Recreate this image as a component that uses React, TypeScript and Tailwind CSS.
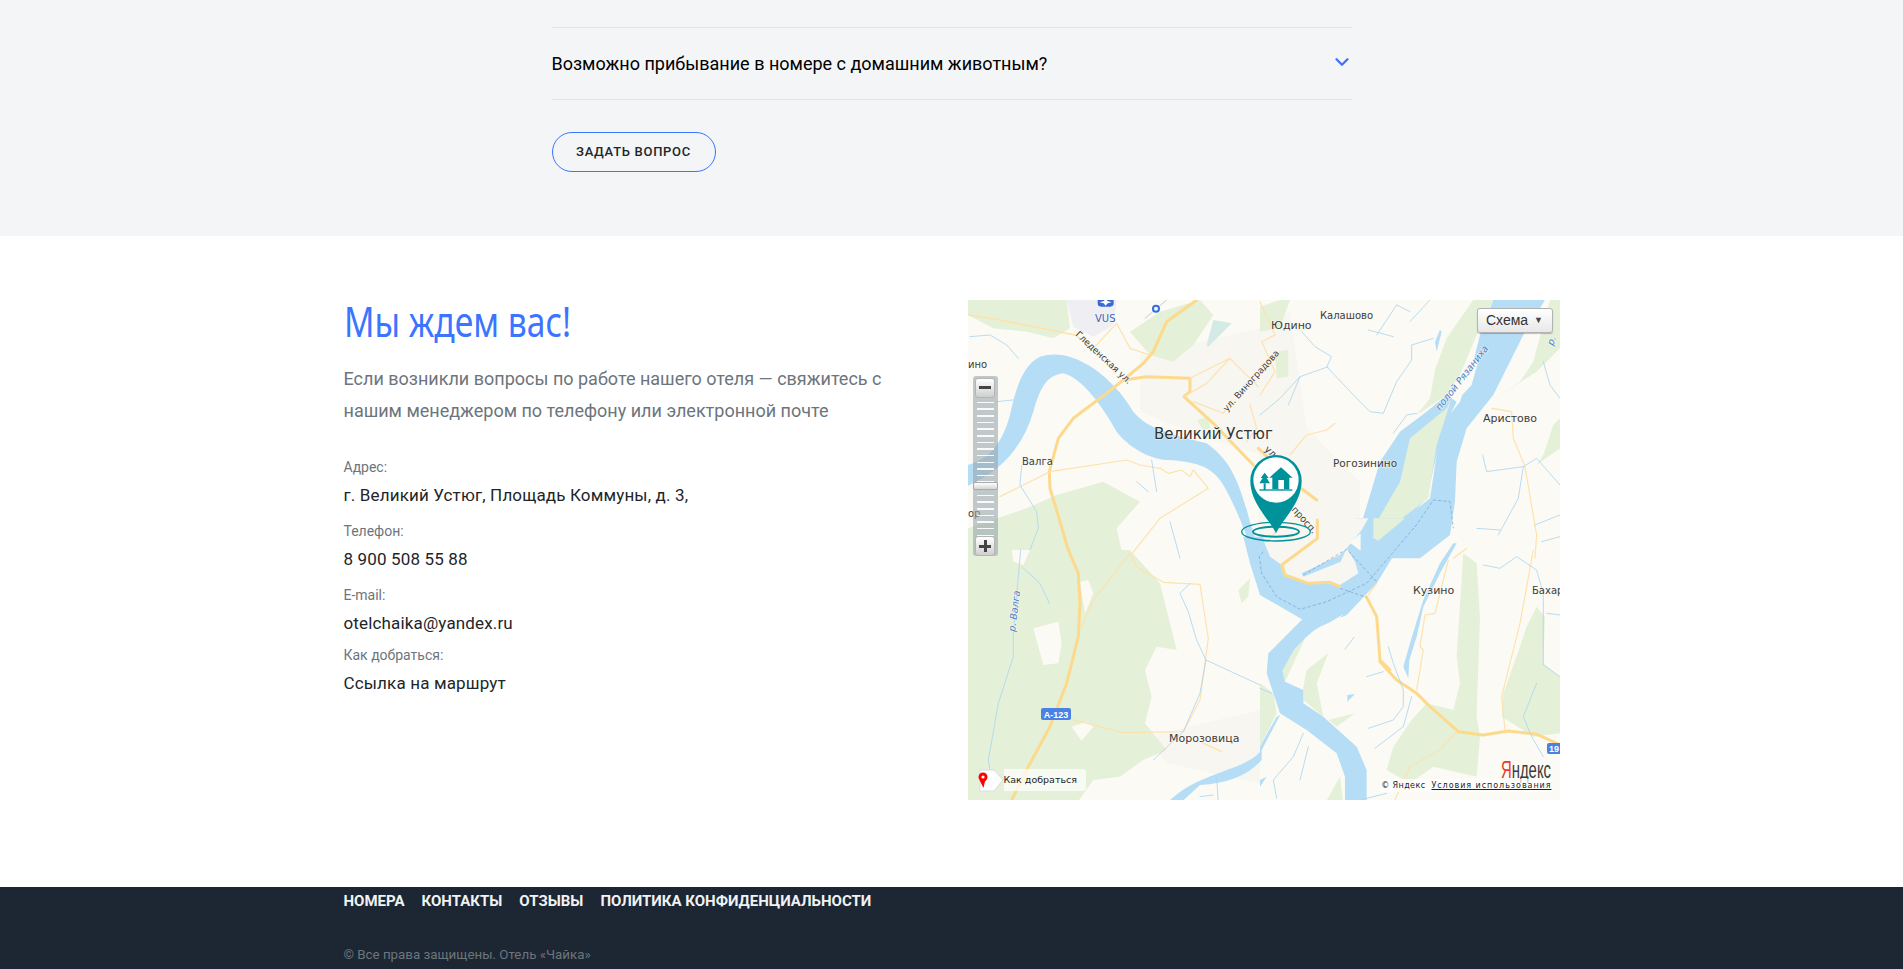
import { ChevronDown } from "lucide-react";

const contacts = [
  { label: "Адрес:", value: "г. Великий Устюг, Площадь Коммуны, д. 3,", mb: "mb-[13px]" },
  { label: "Телефон:", value: "8 900 508 55 88", mb: "mb-[13px]" },
  { label: "E-mail:", value: "otelchaika@yandex.ru", mb: "mb-[9px]" },
  { label: "Как добраться:", value: "Ссылка на маршрут", mb: "" },
];

const navLinks = ["Номера", "Контакты", "Отзывы", "Политика конфиденциальности"];

const LAND = "#fcfaf5";
const URBAN = "#f8f6f0";
const GREEN = "#e4f1d8";
const WATER = "#b5ddf6";
const ROAD = "#fdd98c";
const MINOR = "#fde2ad";
const STREAM = "#a9d6f1";
const DASH = "#6f9fd8";

// coordinates of each group are read at 3x from the reference
function Quadrant({ x, y, children }: { x: number; y: number; children: React.ReactNode }) {
  return <g transform={`translate(${x},${y}) scale(0.3333)`}>{children}</g>;
}

function Greens({ d }: { d: string[] }) {
  return (
    <>
      {d.map((p) => (
        <path key={p} d={p} fill={GREEN} />
      ))}
    </>
  );
}

function Lines({ d, color, width }: { d: string[]; color: string; width: number }) {
  return (
    <>
      {d.map((p) => (
        <path key={p} d={p} fill="none" stroke={color} strokeWidth={width} strokeLinejoin="round" strokeLinecap="round" />
      ))}
    </>
  );
}

function MapLabel({ x, y, size = 11, rotate, color = "#3c3c3c", italic, children }: {
  x: number; y: number; size?: number; rotate?: number; color?: string; italic?: boolean; children: string;
}) {
  return (
    <text
      x={x}
      y={y}
      fontSize={size}
      fill={color}
      fontStyle={italic ? "italic" : "normal"}
      fontFamily="'DejaVu Sans', sans-serif"
      stroke="#fbf9f3"
      strokeOpacity={0.6}
      strokeWidth={1.5}
      paintOrder="stroke"
      transform={rotate ? `rotate(${rotate} ${x} ${y})` : undefined}
    >
      {children}
    </text>
  );
}

function MapDrawing() {
  return (
    <svg viewBox="0 0 592 500" className="absolute inset-0 block h-full w-full">
      <rect width="592" height="500" fill={LAND} />

      {/* top left */}
      <Quadrant x={-8} y={-5}>
        <path d="M540 180 L905 100 L905 480 L740 430 L540 350 Z" fill={URBAN} />
        <path d="M320 15 L470 15 L460 90 L400 125 L340 95 Z" fill="#eeeef3" />
        <Greens d={[
          "M24 15 L320 15 L330 100 L280 130 L200 110 L100 100 L24 60 Z",
          "M510 110 L600 50 L720 15 L760 60 L700 150 L640 200 L570 180 Z",
          "M24 700 L200 640 L290 600 L430 560 L540 620 L470 700 L490 790 L24 790 Z",
          "M710 375 L745 365 L750 400 L730 405 Z",
        ]} />
        <path d="M740 150 L760 75 L815 85 L745 155 Z" fill="#d3ebe4" />
        <path d="M24 510 C70 495 120 470 150 360 C170 270 190 210 240 185 C290 170 340 180 400 220 C450 255 490 300 520 350 C560 395 600 410 740 445 C800 490 830 530 870 680 L905 790 L882 790 C860 720 830 640 790 570 C760 520 720 500 620 495 C560 490 500 450 470 410 C430 340 370 250 310 235 C260 240 240 280 220 350 C190 450 130 525 24 572 Z" fill={WATER} />
        <path d="M445 405 L505 445 L490 450 L450 420 Z" fill={LAND} />
        <Lines width={9} color={ROAD} d={[
          "M710 15 L620 80 L580 170 L550 205 L490 255 L420 310 L340 370 L295 430 L268 530 L270 580 L300 680 L332 790",
          "M490 255 L560 245 L690 250 L690 290 L672 305 L760 385 L880 510",
        ]} />
        <Lines width={5} color={MINOR} d={["M24 60 L120 75 L345 120"]} />
        <Lines width={3.5} color={MINOR} d={[
          "M120 605 L270 530 L500 495 L540 510 L600 520 L625 535 L665 525 L690 545 L700 525 L745 580 L600 670 L505 790",
          "M690 250 L810 190 L900 280",
          "M672 305 L740 265 L810 190",
          "M700 320 L790 355 L800 340",
          "M470 85 L510 160 L570 180",
          "M345 120 L400 160 L470 85",
          "M870 330 L890 400 L860 440",
        ]} />
        <Lines width={2.5} color={STREAM} d={[
          "M30 125 L90 120 L140 150 L175 190",
          "M110 320 L160 315",
          "M575 495 L590 590",
          "M530 560 L565 590",
          "M185 510 L180 570 L230 650 L235 700 L200 790",
          "M630 680 L660 790",
        ]} />
        <Lines width={1.5} color="#999" d={["M555 70 L620 15"]} />
        <circle cx="588" cy="41" r="9" fill="#fff" stroke="#2f6fe0" strokeWidth="6" />
        <rect x="413" y="0" width="48" height="35" rx="10" fill="#3b69d6" />
        <path d="M437 8 L442 18 L455 22 L443 25 L437 32 L431 25 L419 22 L432 18 Z" fill="#fff" />
      </Quadrant>

      {/* top right */}
      <Quadrant x={292} y={-5}>
        <path d="M-5 100 L90 50 L140 400 L300 560 L300 790 L-5 790 Z" fill={URBAN} />
        <Greens d={[
          "M470 360 L510 310 L525 225 L560 130 L640 15 L700 15 L650 120 L600 240 L560 300 Z",
          "M690 320 L780 260 L820 200 L870 15 L900 15 L900 160 L830 230 Z",
          "M850 480 L880 390 L900 370 L900 460 L830 510 Z",
          "M0 35 L60 15 L90 15 L60 100 L0 110 Z",
          "M45 170 L85 165 L85 245 L50 250 Z",
        ]} />
        <path d="M560 300 L500 350 L420 410 L360 500 L330 600 L300 700 L230 790 L340 790 L420 700 L500 610 L530 480 L570 360 L590 320 Z" fill={WATER} />
        <path d="M340 735 L345 690 L420 560 L450 430 L560 340 L575 310 L530 450 L505 610 L400 690 Z" fill={GREEN} />
        <path d="M700 15 L855 15 L790 120 L700 300 L620 400 L590 500 L585 620 L570 720 L480 790 L340 790 L400 700 L510 610 L530 480 L560 370 L600 320 L640 200 L660 120 Z" fill={WATER} />
        <path d="M590 318 L620 230 L660 180 L635 270 Z" fill={LAND} />
        <path d="M525 140 L540 105 L545 110 L530 170 Z" fill={WATER} />
        <Lines width={9} color={ROAD} d={["M-5 460 L110 570 L170 615"]} />
        <Lines width={3.5} color={MINOR} d={[
          "M90 480 L140 420 L200 405 L225 385",
          "M0 20 L45 120 L5 140 L45 230 L0 300",
          "M695 340 L755 350 L760 430 L795 515 L830 720 L825 790",
          "M580 790 L620 760",
        ]} />
        <Lines width={2.5} color={STREAM} d={[
          "M125 110 L165 155 L215 185 L200 215 L290 310 L330 350 L370 355 L410 260 L455 195 L455 150 L520 130",
          "M85 330 L120 245 L205 215",
          "M0 360 L60 310 L120 245",
          "M410 30 L350 120 M325 105 L400 125 M410 30 L450 50",
          "M450 80 L510 15",
          "M668 480 L680 530 L790 515 L830 490 L900 570",
          "M790 515 L775 610 L715 720",
          "M650 700 L720 705",
          "M825 690 L900 660 M845 740 L900 725",
          "M850 200 L870 270 L900 310",
          "M400 415 L440 360 L470 355",
        ]} />
        <path d="M465 696 L520 615 L570 620 L580 700" fill="none" stroke={DASH} strokeWidth="2" strokeDasharray="10 6" />
      </Quadrant>

      {/* bottom left */}
      <Quadrant x={-8} y={250}>
        <path d="M560 560 L900 480 L900 700 L620 640 Z" fill={URBAN} />
        <Greens d={["M24 0 L510 0 L600 100 L650 300 L590 290 L555 360 L575 440 L555 520 L620 600 L550 630 L480 680 L400 690 L350 760 L24 760 Z"]} />
        <path d="M220 235 L295 215 L305 280 L295 340 L250 345 Z" fill={LAND} />
        <path d="M335 530 L380 515 L400 530 L365 572 Z" fill={LAND} />
        <path d="M360 95 L385 90 L400 130 L375 190 Z" fill={LAND} />
        <path d="M155 0 L210 0 L190 45 L160 35 Z" fill={LAND} />
        <path d="M835 120 L870 85 L865 140 L845 160 Z" fill={GREEN} />
        <path d="M620 760 C680 700 750 680 800 660 C860 640 890 620 905 600 L905 630 C860 680 800 700 720 705 L660 760 Z" fill={WATER} />
        <Lines width={9} color={ROAD} d={["M325 0 L355 70 L360 160 L355 260 L320 400 L270 530 L205 650 L150 760"]} />
        <Lines width={3.5} color={MINOR} d={[
          "M510 10 L530 50 L610 97 L720 103 L745 265 L720 450 L670 545 L490 548 L335 508",
          "M510 10 L400 150 L360 240",
          "M720 575 L785 605",
        ]} />
        <Lines width={2.5} color={STREAM} d={[
          "M182 0 L160 250 L160 320 L115 460 L85 630 L90 660",
          "M185 50 L240 100 L268 160",
          "M690 100 L660 130 L685 185 L710 270 L738 330 L720 430 L670 545 L580 630",
          "M738 330 L900 405",
          "M770 680 L775 760 M720 740 L760 735",
        ]} />
      </Quadrant>

      {/* bottom right */}
      <Quadrant x={292} y={250}>
        <Greens d={[
          "M610 10 L650 40 L660 200 L650 500 L660 560 L650 680 L520 650 L450 700 L380 660 L400 590 L455 510 L500 460 L580 480 L600 400 L590 320 Z",
          "M830 170 L855 200 L850 340 L900 380 L900 550 L820 560 L725 500 L730 430 L780 290 L800 230 Z",
          "M130 410 L140 360 L205 310 L170 400 L190 500 L130 450 Z",
          "M205 510 L285 490 L230 530 Z",
          "M195 760 L240 680 L250 760 Z",
          "M0 400 L40 430 L50 490 L0 590 Z",
          "M75 395 L62 340 L135 265 Z",
        ]} />
        <path d="M580 -20 L540 40 L490 150 L450 280 L430 350 L445 385 L448 330 L470 260 L490 170 L540 70 L590 -20 Z" fill={WATER} />
        <path d="M130 205 L25 310 L20 370 L60 490 L140 540 L230 610 L255 680 L255 760 L320 760 L320 660 L290 590 L190 500 L130 460 L130 420 L75 395 L62 340 L135 265 L180 225 Z" fill={WATER} />
        <path d="M0 590 L50 500 L60 495 L0 610 Z" fill={WATER} />
        <path d="M0 690 L20 680 L0 710 Z" fill={WATER} />
        <path d="M262 435 L285 432 L262 455 Z" fill={WATER} />
        <Lines width={9} color={ROAD} d={[
          "M360 335 L410 390 L470 430 L510 470 L595 545 L670 555 L745 543 L830 553 L880 575 L905 587",
        ]} />
        <Lines width={3.5} color={MINOR} d={[
          "M565 30 L525 190 L495 195 L480 290 L490 300 L470 420",
          "M820 0 L780 220 L725 440 L735 540",
          "M590 545 L540 600 L450 650 L400 760",
        ]} />
        <Lines width={2.5} color={STREAM} d={[
          "M385 290 L400 340 L430 420 L430 470 L400 510 L325 535",
          "M345 595 L430 530 L455 440",
          "M850 130 L850 345 L900 380",
          "M830 400 L790 500 L815 560 L850 620",
          "M670 45 L720 55 L770 20 L830 60 L850 130",
          "M130 550 L100 620 L40 690 L50 745",
          "M320 380 L370 365 M255 298 L282 262",
          "M145 590 L120 690 M860 190 L900 195",
          "M0 415 L35 430",
          "M300 750 L380 730",
        ]} />
      </Quadrant>

      {/* confluence below the town */}
      <Quadrant x={272} y={220}>
        <path d="M10 50 L30 130 L60 225 L190 300 L120 370 L85 420 L85 455 L125 455 L175 365 L213 337 L240 320 L320 285 L410 190 L530 -5 L345 -5 L320 85 L230 50 Z" fill={WATER} />
        <path d="M400 55 L400 -5 L495 -5 L415 62 Z" fill={GREEN} />
        <path d="M70 -5 L70 60 L90 110 L125 135 L135 165 L205 190 L275 190 L300 195 L355 160 L345 125 L320 85 L365 30 L385 -5 Z" fill={URBAN} />
        <path d="M185 160 L300 105 L320 85 L302 125 L190 170 Z" fill={WATER} />
        <path d="M330 68 L362 40 L362 92 Z" fill={LAND} />
        <path d="M218 372 L240 325 L310 283 L245 355 Z" fill={LAND} />
        <Lines width={9} color={ROAD} d={[
          "M232 0 L232 55 L125 135 L135 165 L205 190 L270 187 L300 200",
          "M380 232 L410 290 L420 420 L450 450",
        ]} />
        <Lines width={3.5} color={MINOR} d={["M380 232 L410 190", "M85 60 L125 20"]} />
        <path d="M70 95 L58 110 L65 160 L110 230 L180 268 L260 245 L380 190 L525 20 M300 205 L380 232 M190 165 L320 88 L410 185" fill="none" stroke={DASH} strokeWidth="2" strokeDasharray="10 6" />
      </Quadrant>

      {/* road badges */}
      <rect x="73" y="408" width="30" height="12" rx="2" fill="#4a82e4" />
      <text x="88" y="417.5" textAnchor="middle" fontSize="9" fontWeight="700" fill="#fff" fontFamily="'Liberation Sans', sans-serif">А-123</text>
      <rect x="579" y="443" width="16" height="11" rx="2" fill="#4a82e4" />
      <text x="581" y="452" fontSize="9" fontWeight="700" fill="#fff" fontFamily="'Liberation Sans', sans-serif">19</text>

      {/* labels */}
      <MapLabel x={127} y={22} size={10} color="#3a64c0">VUS</MapLabel>
      <MapLabel x={0} y={68} size={10}>ино</MapLabel>
      <MapLabel x={107} y={35} size={9} rotate={43}>Гледенская ул.</MapLabel>
      <MapLabel x={259} y={112} size={9} rotate={-48}>ул. Виноградова</MapLabel>
      <MapLabel x={186} y={139} size={15} color="#333">Великий Устюг</MapLabel>
      <MapLabel x={54} y={165} size={10}>Валга</MapLabel>
      <MapLabel x={0} y={217} size={10}>ор</MapLabel>
      <MapLabel x={303} y={29} size={11}>Юдино</MapLabel>
      <MapLabel x={352} y={19} size={10}>Калашово</MapLabel>
      <MapLabel x={515} y={122} size={11}>Аристово</MapLabel>
      <MapLabel x={365} y={167} size={10.5}>Рогозинино</MapLabel>
      <MapLabel x={472} y={111} size={9.5} rotate={-52} color="#4a7fc8" italic>полой Рязаниха</MapLabel>
      <MapLabel x={47} y={332} size={9.5} rotate={-83} color="#4a7fc8" italic>р. Валга</MapLabel>
      <MapLabel x={585} y={46} size={9.5} rotate={-70} color="#4a7fc8" italic>р.</MapLabel>
      <MapLabel x={201} y={442} size={11}>Морозовица</MapLabel>
      <MapLabel x={445} y={294} size={11}>Кузино</MapLabel>
      <MapLabel x={564} y={294} size={10}>Бахар</MapLabel>
      <MapLabel x={296} y={150} size={9.5} rotate={42}>ул</MapLabel>
      <MapLabel x={323} y={210} size={9.5} rotate={48}>просп.</MapLabel>

      {/* hotel pin */}
      <g transform="translate(252,140) scale(0.3333)">
        <ellipse cx="168" cy="275" rx="103" ry="28" fill="none" stroke="#00929a" strokeWidth="4" />
        <ellipse cx="168" cy="275" rx="69" ry="15" fill="none" stroke="#00929a" strokeWidth="6" />
        <path d="M168 280 C150 240 91 190 91 122 A77 77 0 0 1 245 122 C245 190 186 240 168 280 Z" fill="#00929a" />
        <circle cx="168" cy="120" r="68" fill="#fff" />
        <path d="M183 82 L218 113 L208 113 L208 148 L157 148 L157 113 L148 113 Z" fill="#00929a" />
        <rect x="175" y="120" width="17" height="27" fill="#fff" />
        <path d="M134 98 L146 114 L140 114 L150 130 L118 130 L128 114 L122 114 Z" fill="#00929a" />
        <rect x="131" y="130" width="6" height="20" fill="#00929a" />
        <rect x="118" y="148" width="99" height="4" fill="#00929a" />
      </g>

      {/* yandex logo */}
      <text x="533" y="478" fontSize="24" textLength="50" lengthAdjust="spacingAndGlyphs" fill="#3a3a3a" fontFamily="'Liberation Sans Narrow', 'Liberation Sans', sans-serif">
        <tspan fill="#e8392c">Я</tspan>ндекс
      </text>

      {/* route button pin */}
      <path d="M12 470 H26 L35 480 L26 491 H12 Z" fill="#fff" stroke="#ddd" />
      <circle cx="15" cy="477" r="4.5" fill="#f00" />
      <circle cx="15" cy="477" r="1.6" fill="#fff" />
      <path d="M11.5 480 L15.5 488 L17 481 Z" fill="#f00" />
    </svg>
  );
}

function MapControls() {
  const ticks = Array.from({ length: 21 }, (_, i) => i);
  return (
    <div className="absolute left-[5px] top-[76px] flex h-[180px] w-[25px] flex-col items-center rounded-[3px] bg-[#9aa6ab]/60 pt-[2px]">
      <div className="flex h-[20px] w-[20px] items-center justify-center rounded-[3px] border border-[#b5b5b5] bg-gradient-to-b from-white to-[#cfcfcf]">
        <div className="h-[3px] w-[12px] bg-[#444]" />
      </div>
      <div className="mt-[4px] flex h-[136px] flex-col justify-between">
        {ticks.map((t) => (
          <div key={t} className="h-[1.5px] w-[17px] bg-white/90" />
        ))}
      </div>
      <div className="absolute left-0 top-[106px] h-[8px] w-[25px] rounded-[2px] border border-[#aaa] bg-gradient-to-b from-white to-[#d5d5d5]" />
      <div className="relative mt-auto flex h-[20px] w-[20px] items-center justify-center rounded-[3px] border border-[#b5b5b5] bg-gradient-to-b from-white to-[#cfcfcf]">
        <div className="absolute h-[3px] w-[12px] bg-[#444]" />
        <div className="absolute h-[12px] w-[3px] bg-[#444]" />
      </div>
    </div>
  );
}

function YandexMap() {
  return (
    <div className="relative h-[500px] w-[592px] shrink-0 overflow-hidden font-['DejaVu_Sans',sans-serif]">
      <MapDrawing />
      <MapControls />

      <button className="absolute left-[509px] top-[8px] flex h-[25px] w-[76px] items-center justify-center gap-[6px] rounded-[3px] border border-[#b3b3b3] bg-gradient-to-b from-white to-[#e8e8e8] font-['Liberation_Sans',sans-serif] text-[14px] text-[#333] shadow-[0_1px_1px_rgba(0,0,0,0.25)]">
        Схема
        <span className="text-[9px] text-[#444]">▼</span>
      </button>

      <div className="absolute left-[36px] top-[469px] flex h-[22px] w-[82px] items-center rounded-r-[3px] bg-white/70 text-[9.5px] text-[#222]">
        Как добраться
      </div>

      <div className="absolute right-[8px] top-[479px] flex h-[13px] items-center gap-[6px] whitespace-nowrap bg-white/70 pl-[1px] text-[8px] text-[#222]">
        <span className="tracking-[0.4px]">© Яндекс</span>
        <span className="tracking-[0.95px] underline">Условия использования</span>
      </div>
    </div>
  );
}

export default function App() {
  return (
    <div className="min-h-screen font-['Roboto',sans-serif]">
      <section className="bg-[#f3f5f7] pt-[27px] pb-[64px]">
        <div className="mx-auto w-[800px]">
          <div className="flex h-[73px] items-center justify-between border-y border-[#e2e4e6]">
            <span className="text-[18px] text-black">Возможно прибывание в номере с домашним животным?</span>
            <ChevronDown className="mb-[4px] mr-[-1px] h-[22px] w-[22px] text-[#3b74ff]" strokeWidth={2.5} />
          </div>
          <button className="mt-[32px] h-[40px] w-[164px] rounded-[20px] border border-[#3b74ff] text-[13px] font-medium uppercase tracking-[0.7px] text-[#212529]">
            Задать вопрос
          </button>
        </div>
      </section>

      <section className="bg-white pt-[64px] pb-[87px]">
        <div className="mx-auto flex w-[1216px] justify-between">
          <div className="w-[560px]">
            <h2 className="origin-left scale-x-[0.82] whitespace-nowrap font-['Noto_Sans',sans-serif] text-[41px] leading-[42px] text-[#3b74ff]">
              Мы ждем вас!
            </h2>
            <p className="mt-[21px] text-[18px] leading-[32px] text-[#6c757d]">
              Если возникли вопросы по работе нашего отеля — свяжитесь с нашим менеджером по телефону или электронной почте
            </p>
            <div className="mt-[30px]">
              {contacts.map((c) => (
                <div key={c.label} className={c.mb}>
                  <div className="text-[14px] leading-[21px] text-[#6c757d]">{c.label}</div>
                  <div className="mt-[4px] text-[17px] leading-[26px] tracking-[0.15px] text-[#212529]">{c.value}</div>
                </div>
              ))}
            </div>
          </div>
          <YandexMap />
        </div>
      </section>

      <footer className="h-[82px] overflow-hidden bg-[#1c2733]">
        <div className="mx-auto w-[1216px]">
          <nav className="flex gap-[17px] pt-[4px]">
            {navLinks.map((l) => (
              <a key={l} className="text-[15px] font-bold uppercase leading-[21px] text-[#f0f2f4]">
                {l}
              </a>
            ))}
          </nav>
          <p className="mt-[33px] text-[13.33px] leading-[20px] text-[#6c757d]">© Все права защищены. Отель «Чайка»</p>
        </div>
      </footer>
    </div>
  );
}
